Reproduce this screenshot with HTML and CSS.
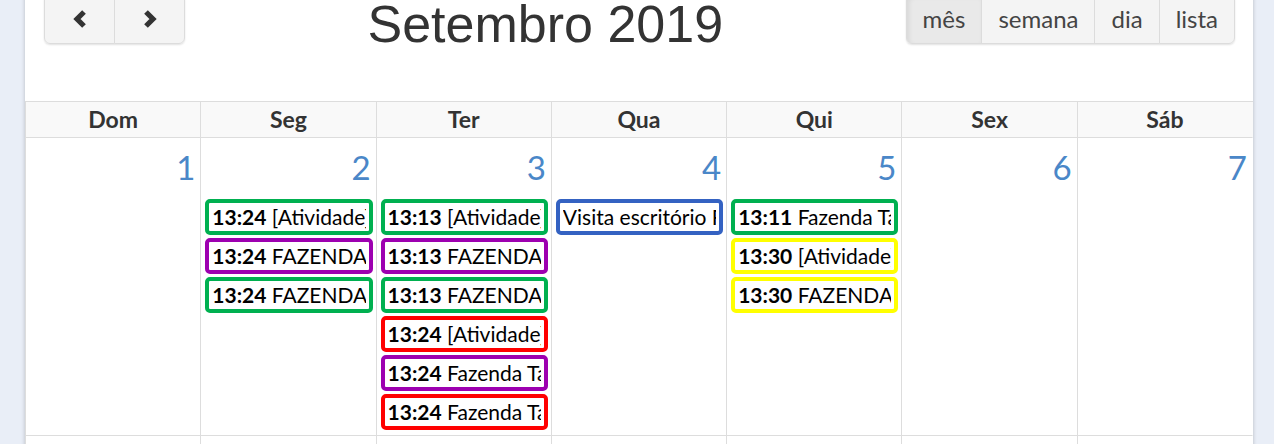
FILE: index.html
```html
<!DOCTYPE html>
<html lang="pt-BR">
<head>
<meta charset="utf-8">
<title>Calendário</title>
<link rel="stylesheet" href="styles.css">
</head>
<body>
<div class="panel">
  <div class="toolbar">
    <div class="btn-group">
      <button class="btn" aria-label="anterior">
        <svg width="16" height="20" viewBox="0 0 16 20"><polyline points="12,3 5,10 12,17" fill="none" stroke="#333" stroke-width="5.2" stroke-linejoin="miter"/></svg>
      </button>
      <button class="btn" aria-label="próximo">
        <svg width="16" height="20" viewBox="0 0 16 20"><polyline points="4,3 11,10 4,17" fill="none" stroke="#333" stroke-width="5.2" stroke-linejoin="miter"/></svg>
      </button>
    </div>
    <h2 class="title">Setembro 2019</h2>
    <div class="btn-group">
      <button class="btn btn-text active">mês</button>
      <button class="btn btn-text">semana</button>
      <button class="btn btn-text">dia</button>
      <button class="btn btn-text">lista</button>
    </div>
  </div>

  <div class="grid">
    <div class="head">Dom</div>
    <div class="head">Seg</div>
    <div class="head">Ter</div>
    <div class="head">Qua</div>
    <div class="head">Qui</div>
    <div class="head">Sex</div>
    <div class="head">Sáb</div>

    <div class="day"><div class="num">1</div></div>
    <div class="day"><div class="num">2</div>
      <div class="ev green"><span class="ev-in"><b>13:24</b> [Atividade] Visita técnica</span></div>
      <div class="ev purple"><span class="ev-in"><b>13:24</b> FAZENDA SANTA RITA</span></div>
      <div class="ev green"><span class="ev-in"><b>13:24</b> FAZENDA BOA VISTA</span></div>
    </div>
    <div class="day"><div class="num">3</div>
      <div class="ev green"><span class="ev-in"><b>13:13</b> [Atividade] Visita técnica</span></div>
      <div class="ev purple"><span class="ev-in"><b>13:13</b> FAZENDA SANTA RITA</span></div>
      <div class="ev green"><span class="ev-in"><b>13:13</b> FAZENDA BOA VISTA</span></div>
      <div class="ev red"><span class="ev-in"><b>13:24</b> [Atividade] Visita técnica</span></div>
      <div class="ev purple"><span class="ev-in"><b>13:24</b> Fazenda Tabapuã</span></div>
      <div class="ev red"><span class="ev-in"><b>13:24</b> Fazenda Tabapuã</span></div>
    </div>
    <div class="day"><div class="num">4</div>
      <div class="ev blue"><span class="ev-in">Visita escritório Fazenda</span></div>
    </div>
    <div class="day"><div class="num">5</div>
      <div class="ev green"><span class="ev-in"><b>13:11</b> Fazenda Tabapuã</span></div>
      <div class="ev yellow"><span class="ev-in"><b>13:30</b> [Atividade] Visita técnica</span></div>
      <div class="ev yellow"><span class="ev-in"><b>13:30</b> FAZENDA SANTA RITA</span></div>
    </div>
    <div class="day"><div class="num">6</div></div>
    <div class="day"><div class="num">7</div></div>

    <div class="day next"></div>
    <div class="day next"></div>
    <div class="day next"></div>
    <div class="day next"></div>
    <div class="day next"></div>
    <div class="day next"></div>
    <div class="day next"></div>
  </div>
</div>
</body>
</html>
```

FILE: styles.css
```css
html, body {
  margin: 0;
  padding: 0;
}
body {
  background: #e9eef7;
  font-family: Lato, "Noto Sans", sans-serif;
  color: #333;
  height: 444px;
  overflow: hidden;
}
.panel {
  margin-left: 25px;
  width: 1228px;
  background: #fff;
  box-shadow: 0 0 4px rgba(0, 0, 0, 0.22);
  height: 460px;
}
.toolbar {
  display: flex;
  justify-content: space-between;
  align-items: flex-start;
  margin-top: -7px;
  padding: 0 18px 0 19px;
  height: 51px;
  margin-bottom: 57px;
}
.btn-group {
  display: flex;
  border-radius: 6px;
  box-shadow: 0 1px 2px rgba(0, 0, 0, 0.12);
}
.btn {
  height: 51px;
  background: #f4f4f4;
  border: 1px solid #dcdcdc;
  margin: 0 0 0 -1px;
  padding: 0;
  display: flex;
  align-items: center;
  justify-content: center;
  font-family: Lato, "Noto Sans", sans-serif;
  font-size: 24px;
  color: #444;
  width: 71px;
}
.btn:first-child {
  margin-left: 0;
  border-radius: 6px 0 0 6px;
}
.btn:last-child {
  border-radius: 0 6px 6px 0;
}
.btn-text {
  width: auto;
  padding: 0 16px;
}
.btn.active {
  background: #e9e9e9;
  box-shadow: inset 2px 3px 5px rgba(0, 0, 0, 0.08);
}
.title {
  margin: 5px 0 0;
  font-family: "Liberation Sans", Arial, sans-serif;
  font-weight: normal;
  font-size: 52px;
  line-height: 52px;
  color: #333;
}
.grid {
  display: grid;
  grid-template-columns: repeat(7, 1fr);
  border-top: 1px solid #ddd;
  border-left: 1px solid #ddd;
}
.head {
  height: 35px;
  line-height: 35px;
  text-align: center;
  font-weight: bold;
  font-size: 23px;
  background: #f9f9f9;
  border-right: 1px solid #ddd;
  border-bottom: 1px solid #ddd;
}
.day {
  height: 297px;
  border-right: 1px solid #ddd;
  border-bottom: 1px solid #ddd;
  min-width: 0;
}
.head:nth-child(7n), .day:nth-child(7n) {
  border-right-color: transparent;
}
.num {
  text-align: right;
  padding: 10px 5px 0 0;
  font-size: 33px;
  line-height: 1.2;
  color: #4a87c8;
  margin-bottom: 11px;
}
.ev {
  margin: 0 3px 3px 4px;
  height: 28px;
  border: 4px solid;
  border-radius: 5px;
  padding: 0 3px 0 3px;
  font-size: 21px;
  line-height: 28px;
  color: #000;
}
.ev-in {
  display: block;
  white-space: nowrap;
  overflow: hidden;
}
.ev b {
  font-weight: bold;
}
.green { border-color: #00b050; }
.purple { border-color: #9d00b0; }
.red { border-color: #ff0000; }
.yellow { border-color: #ffff00; }
.blue { border-color: #3462c2; }
```
